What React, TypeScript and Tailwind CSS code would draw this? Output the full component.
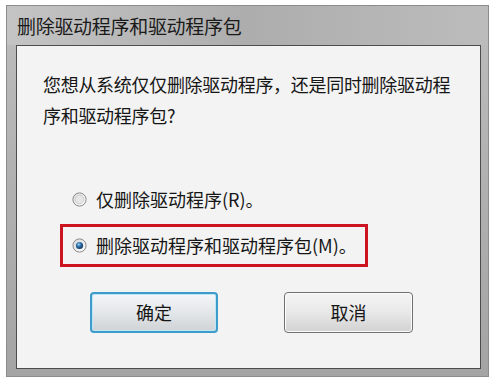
import React from "react";

function Radio({ checked }: { checked?: boolean }) {
  return (
    <svg width="15" height="15" viewBox="0 0 15 15" className="shrink-0">
      <defs>
        <linearGradient id={checked ? "rg1" : "rg0"} x1="0" y1="0" x2="1" y2="1">
          <stop offset="0" stopColor="#d8d8d8" />
          <stop offset="1" stopColor="#ffffff" />
        </linearGradient>
        <radialGradient id="dot" cx="0.4" cy="0.35" r="0.7">
          <stop offset="0" stopColor="#9ad2f2" />
          <stop offset="0.45" stopColor="#2e6fa8" />
          <stop offset="1" stopColor="#0c2f55" />
        </radialGradient>
      </defs>
      <circle cx="7.5" cy="7.5" r="6.6" fill={`url(#${checked ? "rg1" : "rg0"})`} stroke="#8a8a8a" strokeWidth="1" />
      {checked ? (
        <circle cx="7.5" cy="7.5" r="3.6" fill="url(#dot)" />
      ) : (
        <circle cx="7.5" cy="7.5" r="4.2" fill="#e6e6e6" stroke="#c9c9c9" strokeWidth="0.8" />
      )}
    </svg>
  );
}

export default function App() {
  const font = { fontFamily: '"Microsoft YaHei", "Noto Sans CJK SC", "Noto Sans", sans-serif' };
  return (
    <div className="w-[500px] h-[385px] bg-white pt-[5px] pl-[6px]" style={font}>
      <div className="w-[483px] h-[372px] flex flex-col bg-gradient-to-b from-[#bdbdbd] via-[#b0b0b0] to-[#a4a4a4] border border-[#8c8c8c]">
        <div className="h-[39px] flex items-center pl-[10px] bg-gradient-to-r from-[#c4c4c4] via-[#adadad] to-[#bcbcbc]">
          <span className="text-[19px] text-[#1a1a1a] leading-none tracking-[-0.3px]">删除驱动程序和驱动程序包</span>
        </div>
        <div className="flex-1 ml-[9px] mr-[7px] mb-[7px] border border-[#4d4d4d] bg-[#f3f3f3] flex flex-col text-[#161616]">
          <p className="ml-[26px] mt-[23px] text-[18px] leading-[31px] tracking-[-0.3px] whitespace-nowrap">
            您想从系统仅仅删除驱动程序，还是同时删除驱动程
            <br />
            序和驱动程序包?
          </p>
          <div className="mt-[53px] ml-[55px] h-[30px] flex items-center gap-[9px] text-[18px]">
            <Radio />
            <span>仅删除驱动程序(R)。</span>
          </div>
          <div className="mt-[10px] ml-[43px] w-[308px] h-[43px] border-[3px] border-[#cc1420] flex items-center pl-[9px] gap-[9px] text-[18px]">
            <Radio checked />
            <span>删除驱动程序和驱动程序包(M)。</span>
          </div>
          <div className="mt-[25px] flex ml-[73px] gap-[66px]">
            <button className="w-[128px] h-[41px] rounded-[4px] border-2 border-[#3d9cc9] bg-gradient-to-b from-[#f4f6f8] via-[#e4e7ea] to-[#cfd3d6] text-[18px] text-[#161616] shadow-[inset_0_0_0_1px_#bfe6f7]">
              确定
            </button>
            <button className="w-[129px] h-[41px] rounded-[4px] border border-[#707070] bg-gradient-to-b from-[#f5f5f5] via-[#e8e8e8] to-[#d2d2d2] text-[18px] text-[#161616] shadow-[inset_0_0_0_1px_#fcfcfc]">
              取消
            </button>
          </div>
        </div>
      </div>
    </div>
  );
}
